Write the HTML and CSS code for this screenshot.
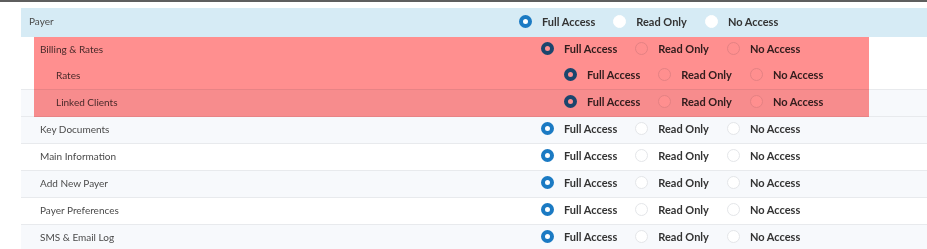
FILE: index.html
```html
<!DOCTYPE html>
<html lang="en">
<head>
  <meta charset="UTF-8">
  <meta name="viewport" content="width=device-width, initial-scale=1.0">
  <title>Payer Permissions</title>
  <link rel="stylesheet" href="styles.css">
</head>
<body>
  <div class="perm-table">

    <div class="perm-row level-0 parent">
      <div class="perm-label">Payer</div>
      <div class="perm-options">
        <span class="option"><span class="radio checked"></span>Full Access</span>
        <span class="option"><span class="radio"></span>Read Only</span>
        <span class="option"><span class="radio"></span>No Access</span>
      </div>
    </div>

    <!-- highlighted group -->
    <div class="perm-group">
      <div class="perm-row level-1 no-line">
        <div class="perm-label">Billing &amp; Rates</div>
        <div class="perm-options">
          <span class="option"><span class="radio checked"></span>Full Access</span>
          <span class="option"><span class="radio"></span>Read Only</span>
          <span class="option"><span class="radio"></span>No Access</span>
        </div>
      </div>
      <div class="perm-row level-2">
        <div class="perm-label">Rates</div>
        <div class="perm-options">
          <span class="option"><span class="radio checked"></span>Full Access</span>
          <span class="option"><span class="radio"></span>Read Only</span>
          <span class="option"><span class="radio"></span>No Access</span>
        </div>
      </div>
      <div class="perm-row level-2 alt">
        <div class="perm-label">Linked Clients</div>
        <div class="perm-options">
          <span class="option"><span class="radio checked"></span>Full Access</span>
          <span class="option"><span class="radio"></span>Read Only</span>
          <span class="option"><span class="radio"></span>No Access</span>
        </div>
      </div>
      <span class="highlight"></span>
    </div>

    <div class="perm-row level-1 alt">
      <div class="perm-label">Key Documents</div>
      <div class="perm-options">
        <span class="option"><span class="radio checked"></span>Full Access</span>
        <span class="option"><span class="radio"></span>Read Only</span>
        <span class="option"><span class="radio"></span>No Access</span>
      </div>
    </div>
    <div class="perm-row level-1">
      <div class="perm-label">Main Information</div>
      <div class="perm-options">
        <span class="option"><span class="radio checked"></span>Full Access</span>
        <span class="option"><span class="radio"></span>Read Only</span>
        <span class="option"><span class="radio"></span>No Access</span>
      </div>
    </div>
    <div class="perm-row level-1 alt">
      <div class="perm-label">Add New Payer</div>
      <div class="perm-options">
        <span class="option"><span class="radio checked"></span>Full Access</span>
        <span class="option"><span class="radio"></span>Read Only</span>
        <span class="option"><span class="radio"></span>No Access</span>
      </div>
    </div>
    <div class="perm-row level-1">
      <div class="perm-label">Payer Preferences</div>
      <div class="perm-options">
        <span class="option"><span class="radio checked"></span>Full Access</span>
        <span class="option"><span class="radio"></span>Read Only</span>
        <span class="option"><span class="radio"></span>No Access</span>
      </div>
    </div>
    <div class="perm-row level-1 alt">
      <div class="perm-label">SMS &amp; Email Log</div>
      <div class="perm-options">
        <span class="option"><span class="radio checked"></span>Full Access</span>
        <span class="option"><span class="radio"></span>Read Only</span>
        <span class="option"><span class="radio"></span>No Access</span>
      </div>
    </div>

  </div>
</body>
</html>
```

FILE: styles.css
```css
/* Page */
body {
  margin: 0;
  font-family: Lato, 'Open Sans', sans-serif;
  background-color: #ffffff;
  border-top: 2px solid #5e5e5e;
  overflow: hidden;
}

/* Permission table */
.perm-table {
  margin: 6px 0 0 21px;
}

.perm-row {
  display: flex;
  align-items: center;
  height: 27px;
  box-sizing: border-box;
  padding-bottom: 3px;
  border-bottom: 1px solid #e8eaed;
  background-color: #ffffff;
}

.perm-row.alt {
  background-color: #f7f9fc;
}

.perm-row.no-line {
  height: 26px;
  border-bottom: none;
}

.perm-row.parent {
  height: 29px;
  background-color: #d6ebf5;
  border-bottom: none;
}

.perm-label {
  flex-shrink: 0;
  box-sizing: border-box;
  font-size: 10px;
  color: #4a4a4a;
}

/* label column widths push the radios to their columns */
.level-0 .perm-label { width: 498px; padding-left: 8px; }
.level-1 .perm-label { width: 520px; padding-left: 19px; }
.level-2 .perm-label { width: 543px; padding-left: 35px; }

.perm-options {
  display: flex;
  align-items: center;
}

.option {
  display: flex;
  align-items: center;
  margin-right: 18px;
  font-size: 11px;
  font-weight: 700;
  color: #333333;
}

.radio {
  width: 13px;
  height: 13px;
  box-sizing: border-box;
  border-radius: 50%;
  margin-right: 10px;
  background-color: #ffffff;
  border: 1px solid #e4e6e9;
}

.radio.checked {
  border: 4px solid #1b7ac3;
}

.parent .radio {
  border-color: #ffffff;
}

.parent .radio.checked {
  border-color: #1b7ac3;
}

/* Red highlight over the billing group */
.perm-group {
  position: relative;
}

.highlight {
  position: absolute;
  top: 0;
  bottom: 0;
  left: 13px;
  width: 835px;
  background-color: #ff8f8f;
  mix-blend-mode: multiply;
  pointer-events: none;
}
```
